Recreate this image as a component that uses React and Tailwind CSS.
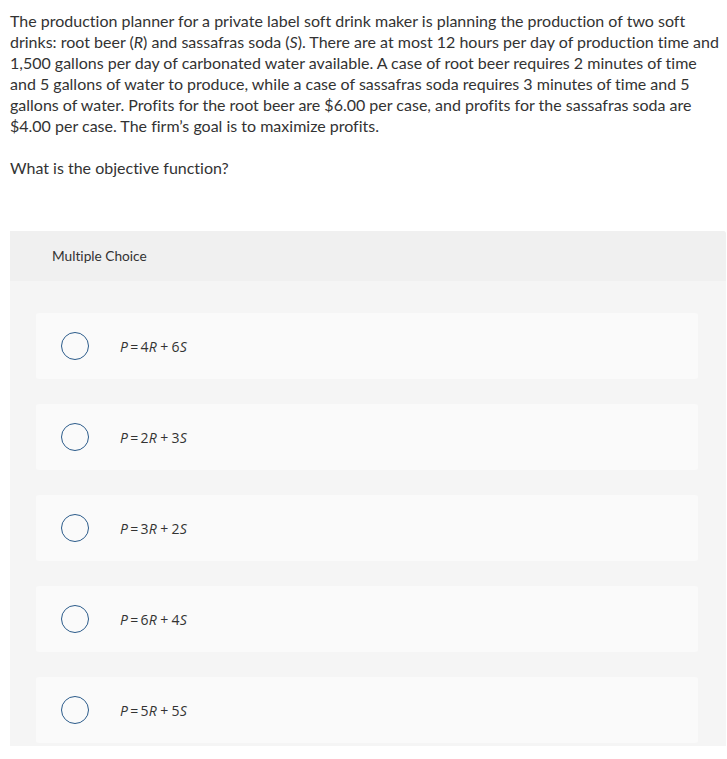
export default function App() {
  const options = [
    ["4", "6"],
    ["2", "3"],
    ["3", "2"],
    ["6", "4"],
    ["5", "5"],
  ];

  return (
    <div className="min-h-[759px] bg-white text-[#333] font-['Lato',sans-serif] [font-variant-ligatures:none]">
      <div className="pl-[10px] pr-[2px] pt-[10px] text-[16px] leading-[21px]">
        <p>
          The production planner for a private label soft drink maker is planning the production of two soft
          <br />
          drinks: root beer (<i>R</i>) and sassafras soda (<i>S</i>). There are at most 12 hours per day of production time and
          <br />
          1,500 gallons per day of carbonated water available. A case of root beer requires 2 minutes of time
          <br />
          and 5 gallons of water to produce, while a case of sassafras soda requires 3 minutes of time and 5
          <br />
          gallons of water. Profits for the root beer are $6.00 per case, and profits for the sassafras soda are
          <br />
          $4.00 per case. The firm’s goal is to maximize profits.
        </p>
        <p className="mt-[21px]">What is the objective function?</p>
      </div>

      <div className="ml-[10px] mr-[1px] mt-[53px] bg-[#f5f5f5] rounded-tr-[3px] pb-[3px]">
        <div className="h-[50px] bg-[#f0f0f0] pl-[42px] flex items-center text-[13.7px] rounded-tr-[3px]">
          Multiple Choice
        </div>
        <div className="pt-[32px] pl-[26px] pr-[28px] flex flex-col gap-[25px]">
          {options.map(([r, s], i) => (
            <label key={i} className="h-[66px] bg-[#fafafa] rounded-[3px] flex items-center cursor-pointer">
              <span className="ml-[25px] w-[28px] h-[28px] rounded-full border-[1.5px] border-[#2b5b8a] shrink-0" />
              <span className="ml-[31px] text-[14px] text-[#333] font-['Open_Sans',sans-serif] tracking-[0.3px]">
                <i>P</i>
                <span className="mx-[2px]">=</span>
                {r}
                <i>R</i>
                <span className="mx-[3px]">+</span>
                {s}
                <i>S</i>
              </span>
            </label>
          ))}
        </div>
      </div>
    </div>
  );
}
